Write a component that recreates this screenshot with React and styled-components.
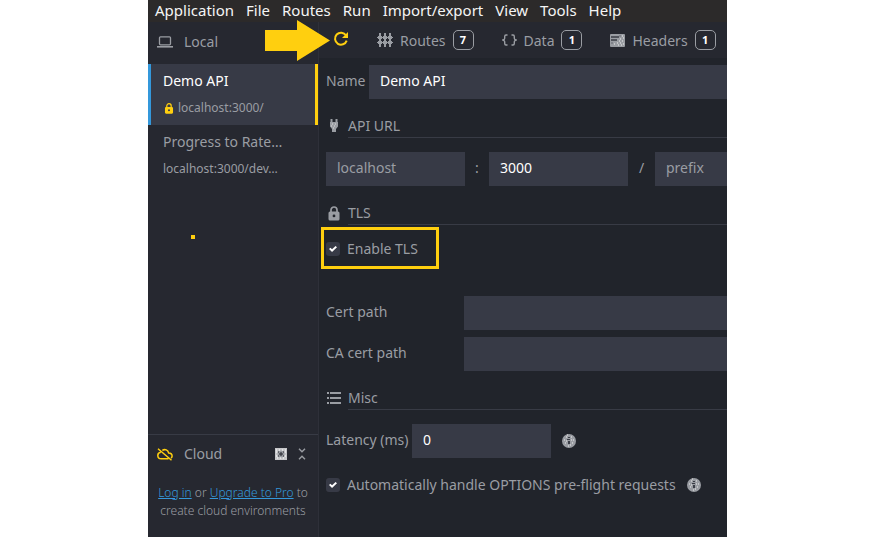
import React from "react";
import styled, { createGlobalStyle } from "styled-components";

const yellow = "#ffcf0f";
const blue = "#3498db";
const muted = "#9a9da3";
const line = "#383b45";
const field = "#373a46";

const GlobalStyle = createGlobalStyle`
  *, *::before, *::after { box-sizing: border-box; }
  body { margin: 0; background: #fff; }
  body, button, input { font-family: "Noto Sans", "Open Sans", sans-serif; font-size: 14px; }
  button { border: 0; padding: 0; background: none; color: inherit; }
  svg { display: block; flex: none; }
`;

const Page = styled.div`
  padding: 0 148px;
  line-height: 20px;
  color: ${muted};
`;

const Window = styled.div`
  display: flex;
  flex-direction: column;
  min-height: 100vh;
  overflow: hidden;
  background: #21242b;
`;

const MenuBar = styled.nav`
  display: flex;
  align-items: flex-start;
  gap: 12px;
  height: 22px;
  padding: 0 7px;
  background: #2c2a2a;
`;

const MenuButton = styled.button`
  flex: none;
  color: #f5f5f5;
  font-size: 15px;
  line-height: 20px;
`;

const Body = styled.div`
  display: flex;
  flex: 1;
`;

const Sidebar = styled.aside`
  display: flex;
  flex-direction: column;
  flex: none;
  width: 171px;
  background: #262830;
  border-right: 1px solid #2e3039;
`;

const SideHeader = styled.header`
  position: relative;
  display: flex;
  align-items: center;
  gap: 11px;
  height: ${(p) => (p.$tall ? "40px" : "38px")};
  margin-bottom: ${(p) => (p.$tall ? "2px" : "0")};
  padding: 0 12px 0 9px;
`;

const SideTitle = styled.span`
  flex: 1;
`;

const Pointer = styled.svg`
  position: absolute;
  left: 117px;
  top: -2px;
  z-index: 1;
`;

const Environment = styled.button`
  display: flex;
  flex-direction: column;
  gap: 7px;
  height: 61px;
  padding: 7px 0 0 12px;
  text-align: left;
  line-height: 20px;
  border-left: 3px solid ${(p) => (p.$active ? blue : "transparent")};
  border-right: 3px solid ${(p) => (p.$active ? yellow : "transparent")};
  background: ${(p) => (p.$active ? field : "transparent")};
`;

const EnvironmentName = styled.span`
  color: ${(p) => (p.$active ? "#fff" : muted)};
`;

const Address = styled.span`
  display: flex;
  align-items: center;
  gap: 3px;
  font-size: 12px;
`;

const MarkerArea = styled.div`
  flex: 1;
  padding: 49px 43px;
`;

const Marker = styled.div`
  width: 4px;
  height: 4px;
  background: ${yellow};
`;

const Cloud = styled.section`
  border-top: 1px solid ${line};
  height: 103px;
`;

const CloudText = styled.p`
  margin: 11px 0 0;
  text-align: center;
  font-size: 12px;
  font-weight: 300;
  line-height: 18px;
  white-space: nowrap;
`;

const Link = styled.a`
  color: ${blue};
`;

const Main = styled.main`
  flex: 1;
  min-width: 0;
`;

const Tabs = styled.nav`
  display: flex;
  align-items: center;
  gap: 28px;
  height: 36px;
  padding-left: 14px;
  background: #262830;
`;

const Tab = styled.button`
  display: flex;
  align-items: center;
  gap: 7px;
  flex: none;
`;

const RestartButton = styled.button`
  flex: none;
  margin-bottom: 3px;
`;

const Badge = styled.span`
  width: 21px;
  height: 20px;
  border: 1px solid ${muted};
  border-radius: 5px;
  color: #fff;
  font-size: 11px;
  font-weight: 700;
  line-height: 18px;
  text-align: center;
`;

const Settings = styled.form`
  padding: 7px 0 0 7px;
`;

const Row = styled.div`
  display: flex;
  align-items: center;
  margin-top: ${(p) => p.$top || 0}px;
`;

const Label = styled.label`
  flex: none;
  width: ${(p) => p.$width}px;
  padding-bottom: 2px;
  white-space: nowrap;
`;

const Field = styled.input`
  height: 34px;
  min-width: 0;
  width: 139px;
  flex: ${(p) => (p.$grow ? "1" : "none")};
  padding: 0 11px 3px;
  border: 0;
  border-radius: 0;
  outline: 0;
  appearance: textfield;
  background: ${field};
  color: #fff;
  &::placeholder { color: ${muted}; opacity: 1; }
`;

const Separator = styled.span`
  flex: none;
  width: ${(p) => p.$width}px;
  padding-bottom: 2px;
  text-align: center;
`;

const Heading = styled.h2`
  display: flex;
  align-items: center;
  height: 24px;
  margin: 15px 0 0;
  font-size: 14px;
  font-weight: 400;
`;

const HeadingIcon = styled.span`
  display: flex;
  width: 22px;
  padding-left: ${(p) => p.$inset || 0}px;
`;

const HeadingText = styled.span`
  flex: 1;
  height: 24px;
  line-height: 23px;
  border-bottom: 1px solid ${line};
`;

const CheckLabel = styled.label`
  display: flex;
  align-items: center;
  gap: 7px;
`;

const Highlight = styled.div`
  display: flex;
  width: 118px;
  height: 42px;
  margin: 2px 0 0 -5px;
  padding: 2px 2px 0;
  border: 3px solid ${yellow};
  white-space: nowrap;
`;

const Checkbox = styled.input`
  appearance: none;
  display: grid;
  place-items: center;
  flex: none;
  width: 14px;
  height: 14px;
  margin: 0;
  border-radius: 3px;
  background: ${field};
  &:checked::before {
    content: "";
    width: 8px;
    height: 6px;
    background: #fff;
    clip-path: polygon(0 50%, 18% 28%, 38% 55%, 82% 0, 100% 20%, 38% 100%);
  }
`;

const Hint = styled.button`
  margin-left: 11px;
`;

const LaptopIcon = () => (
  <svg width="16" height="12" viewBox="0 0 16 12" fill="none" stroke={muted}>
    <rect x="2.5" y="0.8" width="11" height="8" rx="1" strokeWidth="1.3" />
    <path d="M0 10.8h16" strokeWidth="1.6" />
  </svg>
);

const LockIcon = ({ width, height, color }) => (
  <svg width={width} height={height} viewBox="0 0 12 15">
    <path d="M3 6V4a3 3 0 0 1 6 0v2" fill="none" stroke={color} strokeWidth="1.7" />
    <path fill={color} fillRule="evenodd" d="M2 5.5h8A1.5 1.5 0 0 1 11.5 7v6A1.5 1.5 0 0 1 10 14.5H2A1.5 1.5 0 0 1 .5 13V7A1.5 1.5 0 0 1 2 5.5zM6 8.500a1.400 1.400 0 1 0 0 2.800a1.400 1.400 0 0 0 0-2.800z" />
  </svg>
);

const RefreshIcon = () => (
  <svg width="16" height="16" viewBox="0 0 16 16">
    <path d="M13 4.300A6 6 0 1 0 13.700 9.600" fill="none" stroke={yellow} strokeWidth="2" />
    <path d="M15 1v6H9z" fill={yellow} />
  </svg>
);

const RoutesIcon = () => (
  <svg width="16" height="14" viewBox="0 0 16 14" fill={muted}>
    <path d="M2 0h2v14H2zM7 0h2v14H7zM12 0h2v14h-2z" />
    <path d="M0 4h16v1H0zM0 9h16v1H0z" />
    <path d="M1 3h4v3H1zM6 3h4v3H6zM11 3h4v3h-4zM1 8h4v3H1zM6 8h4v3H6zM11 8h4v3h-4z" />
  </svg>
);

const DataIcon = () => (
  <svg width="15" height="12" viewBox="0 0 15 12" fill="none" stroke={muted} strokeWidth="1.4">
    <path d="M5.5 1H4Q2.7 1 2.7 2.5v1.7Q2.7 5.5 1 6q1.7.5 1.7 1.8v1.7Q2.7 11 4 11h1.5M9.5 1H11q1.3 0 1.3 1.5v1.7q0 1.3 1.7 1.8q-1.7.5-1.7 1.8v1.7Q12.3 11 11 11H9.5" />
  </svg>
);

const HeadersIcon = () => (
  <svg width="15" height="13" viewBox="0 0 15 13">
    <rect width="15" height="13" rx="1" fill={muted} />
    <path d="M1 3h8M1 6h6" stroke="#3a3d46" strokeWidth="1.4" />
    <path d="M12 2h1M13 4h1M10 5h1M12 7h1M9 7h1M7 9h1M10 9h1M13 10h1M4 10h1M8 11h1M11 11h1" stroke="#eee" />
    <path d="M1 9h2M10 1v2" stroke="#666973" />
  </svg>
);

const PlugIcon = () => (
  <svg width="10" height="14" viewBox="0 0 10 14" fill={muted}>
    <path d="M1.500 0h2v3h3V0h2v3H9v4.500L7 10v3H3v-3L1 7.500V3h.5z" />
    <path d="M3 5h1M6 5h1M2 7h1M5 7h1M4 9h1" stroke="#ddd" />
  </svg>
);

const ListIcon = () => (
  <svg width="14" height="12" viewBox="0 0 14 12" stroke={muted} strokeWidth="2">
    <path d="M0 1h2M3 1h11M0 6h2M3 6h11M0 11h2M3 11h11" />
  </svg>
);

const CloudOffIcon = () => (
  <svg width="16" height="13" viewBox="0 0 16 13" fill="none" stroke={yellow} strokeWidth="1.500">
    <path d="M3.800 4.200C2 4.400.8 5.700.8 7.400c0 2 1.500 3.300 3.400 3.300h7.300M5.300 2.400C8 .7 11 2 11.600 4.900c2.100.1 3.500 1.300 3.500 3.100 0 .9-.4 1.600-1 2.100M1 .8l13.500 11.500" />
  </svg>
);

const AddIcon = () => (
  <svg width="12" height="12" viewBox="0 0 12 12">
    <rect width="12" height="12" fill="#c6c7ca" />
    <circle cx="6" cy="6" r="3.500" fill={muted} />
    <path d="M6 4v4M4 6h4M3 4h1M8 4h1M3 8h1M8 8h1" stroke="#262830" />
    <path d="M1 2h1M4 2h1M7 2h1M10 2h1M1 4h1M10 4h1M1 8h1M10 8h1M2 10h1M5 10h1M8 10h1" stroke="#fff" />
  </svg>
);

const CollapseIcon = () => (
  <svg width="8" height="12" viewBox="0 0 8 12" fill="none" stroke={muted} strokeWidth="1.4">
    <path d="M1 .8l3 3 3-3M1 11.2l3-3 3 3" />
  </svg>
);

const InfoIcon = () => (
  <svg width="14" height="14" viewBox="0 0 14 14">
    <circle cx="7" cy="7" r="7" fill={muted} />
    <path d="M6 3h2v1H6zM5 5h3v1H5zM6 7h2v3H6z" fill="#3a3d46" />
    <path d="M4 3h1M9 3h1M2 6h1M11 6h1M3 9h1M10 9h1M6 12h1M9 6h1M4 7h1M8 11h1M5 1h1" stroke="#eee" />
  </svg>
);

const menus = ["Application", "File", "Routes", "Run", "Import/export", "View", "Tools", "Help"];

const tabs = [
  { name: "Routes", count: 7, Icon: RoutesIcon },
  { name: "Data", count: 1, Icon: DataIcon },
  { name: "Headers", count: 1, Icon: HeadersIcon },
];

function SectionHeading({ icon, inset, children }) {
  return (
    <Heading>
      <HeadingIcon $inset={inset}>{icon}</HeadingIcon>
      <HeadingText>{children}</HeadingText>
    </Heading>
  );
}

export default function App() {
  return (
    <Page>
      <GlobalStyle />
      <Window>
        <MenuBar>
          {menus.map((name) => <MenuButton key={name}>{name}</MenuButton>)}
        </MenuBar>
        <Body>
          <Sidebar>
            <SideHeader $tall>
              <LaptopIcon />
              <SideTitle>Local</SideTitle>
              <Pointer width="65" height="41" viewBox="0 0 65 41">
                <path d="M0 10h32V0l33 20.5L32 41V31H0z" fill={yellow} />
              </Pointer>
            </SideHeader>
            <Environment $active>
              <EnvironmentName $active>Demo API</EnvironmentName>
              <Address>
                <LockIcon width={12} height={11} color={yellow} />
                localhost:3000/
              </Address>
            </Environment>
            <Environment>
              <EnvironmentName>Progress to Rate…</EnvironmentName>
              <Address>localhost:3000/dev…</Address>
            </Environment>
            <MarkerArea>
              <Marker />
            </MarkerArea>
            <Cloud>
              <SideHeader>
                <CloudOffIcon />
                <SideTitle>Cloud</SideTitle>
                <button type="button" aria-label="Add cloud environment"><AddIcon /></button>
                <button type="button" aria-label="Collapse cloud environments"><CollapseIcon /></button>
              </SideHeader>
              <CloudText>
                <Link href="#login">Log in</Link> or <Link href="#pro">Upgrade to Pro</Link> to
                <br />
                create cloud environments
              </CloudText>
            </Cloud>
          </Sidebar>
          <Main>
            <Tabs>
              <RestartButton aria-label="Restart server"><RefreshIcon /></RestartButton>
              {tabs.map(({ name, count, Icon }) => (
                <Tab key={name}>
                  <Icon />
                  {name}
                  <Badge>{count}</Badge>
                </Tab>
              ))}
            </Tabs>
            <Settings>
              <Row>
                <Label $width={43} htmlFor="name">Name</Label>
                <Field id="name" $grow defaultValue="Demo API" />
              </Row>
              <SectionHeading icon={<PlugIcon />} inset={3}>API URL</SectionHeading>
              <Row $top={14}>
                <Field aria-label="Hostname" placeholder="localhost" />
                <Separator $width={24}>:</Separator>
                <Field aria-label="Port" defaultValue="3000" />
                <Separator $width={27}>/</Separator>
                <Field aria-label="Prefix" $grow placeholder="prefix" />
              </Row>
              <SectionHeading icon={<LockIcon width={12} height={15} color={muted} />} inset={2}>TLS</SectionHeading>
              <Highlight>
                <CheckLabel>
                  <Checkbox type="checkbox" defaultChecked />
                  Enable TLS
                </CheckLabel>
              </Highlight>
              <Row $top={27}>
                <Label $width={138} htmlFor="cert">Cert path</Label>
                <Field id="cert" $grow />
              </Row>
              <Row $top={7}>
                <Label $width={138} htmlFor="ca">CA cert path</Label>
                <Field id="ca" $grow />
              </Row>
              <SectionHeading icon={<ListIcon />} inset={1}>Misc</SectionHeading>
              <Row $top={14}>
                <Label $width={86} htmlFor="latency">Latency (ms)</Label>
                <Field id="latency" type="number" defaultValue="0" />
                <Hint type="button" aria-label="About latency"><InfoIcon /></Hint>
              </Row>
              <Row $top={17}>
                <CheckLabel>
                  <Checkbox type="checkbox" defaultChecked />
                  Automatically handle OPTIONS pre-flight requests
                </CheckLabel>
                <Hint type="button" aria-label="About pre-flight requests"><InfoIcon /></Hint>
              </Row>
            </Settings>
          </Main>
        </Body>
      </Window>
    </Page>
  );
}
